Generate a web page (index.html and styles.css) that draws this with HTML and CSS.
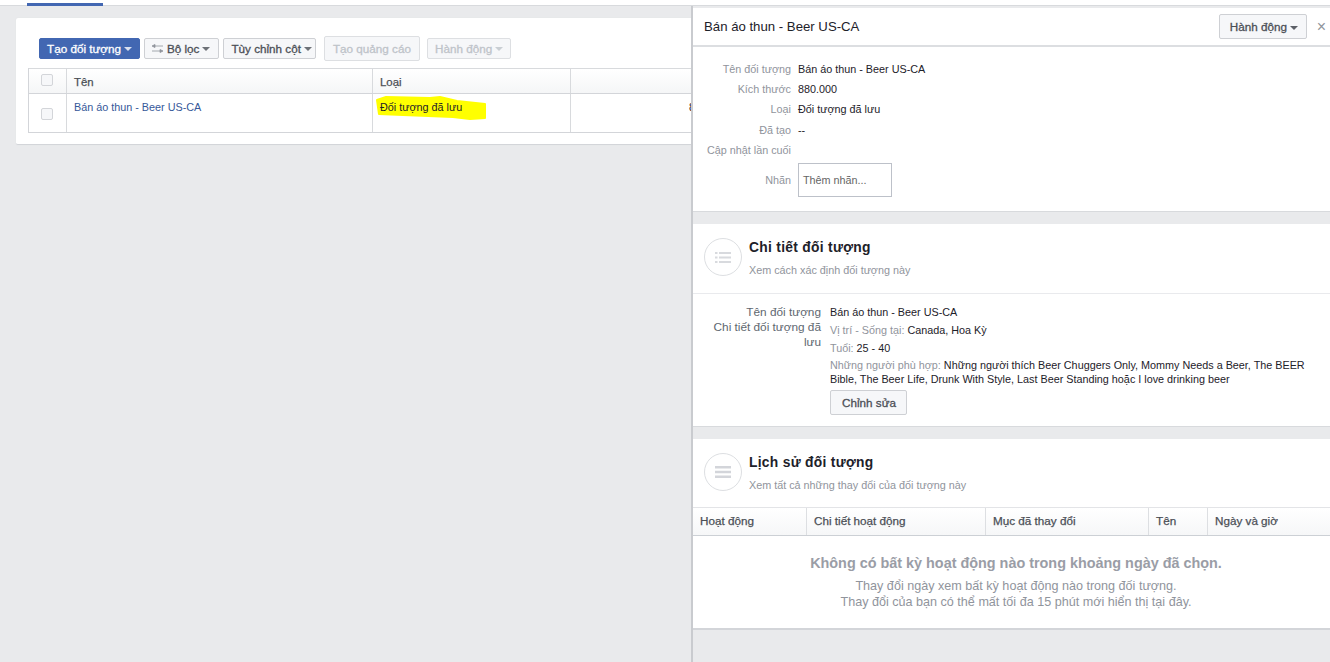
FILE: index.html
```html
<!DOCTYPE html>
<html lang="vi">
<head>
<meta charset="utf-8">
<title>Đối tượng</title>
<link rel="stylesheet" href="styles.css">
</head>
<body>
<div class="topbar"><div class="tab"></div></div>
<main class="card">
  <div class="toolbar">
    <button class="btn primary">Tạo đối tượng <i class="caret"></i></button>
    <button class="btn filter-btn"><svg class="filter" width="11" height="9" viewBox="0 0 11 9"><path d="M3 2H11M0 2L3 .5V3.500zM0 7H8M11 7L8 5.500V8.500z" fill="#90949c" stroke="#90949c" stroke-width=".8"/></svg>Bộ lọc <i class="caret"></i></button>
    <button class="btn cols">Tùy chỉnh cột<i class="caret"></i></button>
    <button class="btn disabled tall">Tạo quảng cáo</button>
    <button class="btn disabled">Hành động <i class="caret"></i></button>
  </div>
  <div class="grid-table">
    <div class="grid-head">
      <div class="c c-check"><span class="check"></span></div>
      <div class="c c-name">Tên</div>
      <div class="c c-type">Loại</div>
      <div class="c c-size"></div>
    </div>
    <div class="grid-row">
      <div class="c c-check"><span class="check"></span></div>
      <div class="c c-name"><a class="link">Bán áo thun - Beer US-CA</a></div>
      <div class="c c-type"><span class="mark-text">Đối tượng đã lưu</span>
        <svg class="marker" width="112" height="26" viewBox="0 0 112 26"><path d="M2 5L11 2L55 3L65 2L82 6L110 9L110 23L95 24L78 22L28 20L4 19Z" fill="#ffff00" stroke="#ffff00" stroke-width="2" stroke-linejoin="round"/></svg>
      </div>
      <div class="c c-size">880.000</div>
    </div>
  </div>
</main>

<aside class="panel">
  <header class="panel-head">
    <h1>Bán áo thun - Beer US-CA</h1>
    <button class="btn action">Hành động <i class="caret dark"></i></button>
    <span class="close">×</span>
  </header>
  <section class="info">
    <dl class="info-list">
      <div><dt>Tên đối tượng</dt><dd>Bán áo thun - Beer US-CA</dd></div>
      <div><dt>Kích thước</dt><dd>880.000</dd></div>
      <div><dt>Loại</dt><dd>Đối tượng đã lưu</dd></div>
      <div><dt>Đã tạo</dt><dd>--</dd></div>
      <div><dt>Cập nhật lần cuối</dt><dd></dd></div>
      <div class="tags"><dt>Nhãn</dt><dd><span class="tag-input">Thêm nhãn...</span></dd></div>
    </dl>
  </section>
  <section class="block details">
    <div class="block-head">
      <span class="round"><svg width="16" height="13" viewBox="0 0 16 13"><path d="M0 1h2.500v2H0zM4 1h12v2H4zM0 5.500h2.500v2H0zM4 5.500h12v2H4zM0 10h2.500v2H0zM4 10h12v2H4z" fill="#d8dade"/></svg></span>
      <div><h2>Chi tiết đối tượng</h2><p>Xem cách xác định đối tượng này</p></div>
    </div>
    <div class="detail-body">
      <div class="detail-labels">Tên đối tượng<br>Chi tiết đối tượng đã lưu</div>
      <div class="detail-values">
        <div class="v1">Bán áo thun - Beer US-CA</div>
        <div class="v2"><span class="muted">Vị trí - Sống tại:</span> Canada, Hoa Kỳ</div>
        <div class="v2"><span class="muted">Tuổi:</span> 25 - 40</div>
        <div class="v3"><span class="muted">Những người phù hợp:</span> Những người thích Beer Chuggers Only, Mommy Needs a Beer, The BEER Bible, The Beer Life, Drunk With Style, Last Beer Standing hoặc I love drinking beer</div>
        <button class="btn edit">Chỉnh sửa</button>
      </div>
    </div>
  </section>
  <section class="block history">
    <div class="block-head">
      <span class="round"><svg width="16" height="12" viewBox="0 0 16 12"><path d="M0 0h16v2.500H0zM0 4.700h16v2.500H0zM0 9.400h16v2.500H0z" fill="#d3d5da"/></svg></span>
      <div><h2>Lịch sử đối tượng</h2><p>Xem tất cả những thay đổi của đối tượng này</p></div>
    </div>
    <div class="hist-head">
      <div class="h1">Hoạt động</div>
      <div class="h2">Chi tiết hoạt động</div>
      <div class="h3">Mục đã thay đổi</div>
      <div class="h4">Tên</div>
      <div class="h5">Ngày và giờ</div>
    </div>
    <div class="empty">
      <h3>Không có bất kỳ hoạt động nào trong khoảng ngày đã chọn.</h3>
      <p>Thay đổi ngày xem bất kỳ hoạt động nào trong đối tượng.<br>Thay đổi của bạn có thể mất tối đa 15 phút mới hiển thị tại đây.</p>
    </div>
  </section>
</aside>
</body>
</html>
```
FILE: styles.css
```css
* { box-sizing: border-box; }
html, body { margin: 0; height: 100%; overflow: hidden; }
body {
  position: relative;
  background: #e9eaec;
  font-family: "Liberation Sans", Arial, sans-serif;
  font-size: 10.800px;
  color: #1d2129;
}
.topbar {
  height: 6px;
  background: #fff;
  border-bottom: 1px solid #d8dadd;
  display: flex;
  align-items: flex-end;
  padding-left: 27px;
}
.tab { width: 76px; height: 3px; background: #4267b2; margin-bottom: -1px; }

.card {
  margin: 12px 0 0 16px;
  height: 127px;
  background: #fff;
  border-bottom: 1px solid #d3d5d9;
  border-radius: 2px;
  padding: 19px 0 0 12px;
  box-shadow: 0 0 1px #d8dadd;
}
.toolbar { display: flex; align-items: center; gap: 4px; height: 22px; padding-left: 11px; }
.btn {
  height: 21px;
  padding: 0 7px;
  border: 1px solid #ced0d4;
  border-radius: 2px;
  background: #f6f7f9;
  color: #4b4f56;
  font: 11.700px "Liberation Sans", Arial, sans-serif;
  -webkit-text-stroke: .3px currentColor;
  display: inline-flex;
  align-items: center;
  white-space: nowrap;
}
.btn.primary { background: #4267b2; border-color: #4267b2; color: #fff; }
.btn.filter-btn { padding-right: 8px; }
.btn.disabled { color: #bec3c9; border-color: #dddfe2; padding-right: 7px; }
.btn.tall { height: 25px; padding: 0 8px; margin: 0 3px 0 4px; }
.btn.cols { padding-right: 3px; }
.caret {
  display: inline-block;
  width: 0; height: 0;
  margin-left: 3px;
  margin-top: 2px;
  border: 4px solid transparent;
  border-bottom: 0;
  border-top: 4px solid currentColor;
  opacity: .8;
}
.filter { margin-right: 4px; }

.grid-table { margin-top: 9px; border-left: 1px solid #d3d5d9; }
.grid-head, .grid-row { display: flex; }
.grid-head {
  height: 26px;
  border-top: 1px solid #d8dadd;
  border-bottom: 1px solid #d3d5d9;
  background: linear-gradient(#fff, #f5f6f7);
  font-size: 11.400px;
  -webkit-text-stroke: .25px currentColor;
  color: #4b4f56;
  line-height: 26px;
}
.grid-row { height: 39px; border-bottom: 1px solid #d3d5d9; }
.c { padding-left: 7px; border-right: 1px solid #d8dadd; }
.c-check { width: 38px; padding: 0 2px 0 0; display: flex; justify-content: center; }
.c-name { width: 306px; }
.c-type { width: 198px; position: relative; }
.c-size { flex: 1; border-right: 0; }
.grid-head .c-check { padding-top: 5px; }
.check {
  width: 12px; height: 12px;
  border: 1px solid #d3d5d9;
  border-radius: 2px;
  background: #f6f7f9;
}
.grid-row .c { padding-top: 7px; }
.grid-row .c-check { padding-top: 14px; }
.grid-row .c-size { text-align: left; padding-left: 118px; }
.link { color: #365899; }
.mark-text { position: relative; z-index: 1; }
.marker { position: absolute; left: 2px; top: 1px; }

.panel {
  position: absolute;
  top: 6px; left: 691px; right: 0; bottom: 0;
  background: #e9eaec;
  border-left: 2px solid #c9cbcf;
  padding-top: 2px;
}
.panel-head {
  height: 39px;
  background: #fff;
  border-bottom: 2px solid #dcdee1;
  display: flex;
  align-items: center;
  padding-left: 11px;
}
.panel-head h1 { margin: 0; flex: 1; font-size: 13.200px; font-weight: normal; color: #1d2129; }
.btn.action { height: 25px; padding: 0 8px 0 10px; color: #4b4f56; }
.caret.dark { opacity: .9; }
.close { width: 23px; padding-left: 6px; text-align: center; color: #90949c; font-size: 16px; }
.info {
  height: 165px;
  background: #fff;
  border-bottom: 1px solid #d8dadd;
  padding-top: 12px;
}
.info-list { margin: 0; }
.info-list > div { display: flex; height: 20.200px; align-items: center; }
.info-list dt { width: 98px; text-align: right; color: #90949c; }
.info-list dd { margin: 0 0 0 7px; color: #1d2129; }
.info-list .tags { height: 34px; margin-top: 3px; }
.tag-input {
  display: flex;
  align-items: center;
  width: 94px; height: 34px;
  padding: 0 4px;
  border: 1px solid #bdc1c9;
  color: #666;
}
.block { margin-top: 12px; background: #fff; }
.details { height: 203px; border-bottom: 1px solid #d8dadd; }
.block-head { display: flex; height: 69px; padding: 14px 0 0 11px; gap: 7px; }
.round {
  width: 38px; height: 38px;
  border: 1px solid #dddfe2;
  border-radius: 50%;
  display: flex; align-items: center; justify-content: center;
  flex: none;
}
.block-head h2 { margin: 1px 0 0; font-size: 13.800px; line-height: 18px; font-weight: bold; color: #1d2129; letter-spacing: .3px; }
.block-head p { margin: 5px 0 0; font-size: 10.800px; line-height: 16px; color: #90949c; }
.detail-body { display: flex; border-top: 1px solid #e9eaed; padding-top: 11px; }
.detail-labels { width: 128px; padding-left: 14px; text-align: right; color: #606770; line-height: 15px; font-size: 11.800px; }
.detail-values { margin-left: 9px; flex: 1; padding-right: 20px; line-height: 14px; }
.v1 { height: 18px; }
.v2 { height: 18px; }
.v3 { margin-top: -1px; }
.muted { color: #90949c; }
.btn.edit { height: 25px; padding: 0 10px 0 11px; margin-top: 4px; }

.history { height: 191px; border-bottom: 2px solid #d3d5d9; }
.hist-head {
  display: flex;
  height: 29px;
  border-top: 1px solid #e3e4e7;
  border-bottom: 1px solid #ccd0d5;
  background: linear-gradient(#fff, #f6f7f8);
  color: #4b4f56;
  font-size: 11.700px;
  -webkit-text-stroke: .25px currentColor;
  line-height: 26px;
  margin-top: -1px;
}
.hist-head div { padding-left: 7px; border-right: 1px solid #dddfe2; }
.h1 { width: 114px; }
.h2 { width: 179px; }
.h3 { width: 163px; }
.h4 { width: 59px; }
.hist-head .h5 { flex: 1; border: 0; }
.empty { text-align: center; padding: 18px 0 0 9px; color: #90949c; }
.empty h3 { margin: 0; font-size: 14.400px; line-height: 18px; font-weight: bold; color: #9a9da6; }
.empty p { margin: 6px 0 0; line-height: 16px; font-size: 12.600px; }
```
